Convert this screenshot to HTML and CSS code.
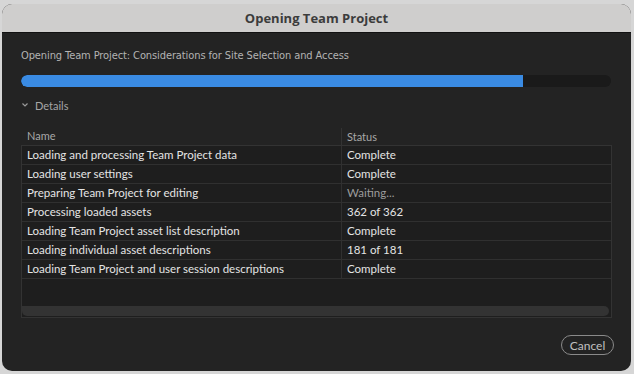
FILE: index.html
```html
<!DOCTYPE html>
<html>
<head>
<meta charset="utf-8">
<link rel="stylesheet" href="styles.css">
</head>
<body>
<div class="window">
  <div class="titlebar">Opening Team Project</div>
  <div class="content">
    <div class="subtitle">Opening Team Project: Considerations for Site Selection and Access</div>
    <div class="progress"><div class="fill" style="width: 85%"></div></div>
    <div class="details">
      <svg class="chev" width="8" height="6" viewBox="0 0 8 6"><path d="M1.5 1.5 L4 4 L6.5 1.5" fill="none" stroke="#9a9a9a" stroke-width="1.2"/></svg>
      <span>Details</span>
    </div>
    <div class="thead">
      <div class="c1">Name</div>
      <div class="c2">Status</div>
    </div>
    <div class="table">
      <div class="row"><div class="c1">Loading and processing Team Project data</div><div class="c2">Complete</div></div>
      <div class="row"><div class="c1">Loading user settings</div><div class="c2">Complete</div></div>
      <div class="row"><div class="c1">Preparing Team Project for editing</div><div class="c2 wait">Waiting...</div></div>
      <div class="row"><div class="c1">Processing loaded assets</div><div class="c2">362 of 362</div></div>
      <div class="row"><div class="c1">Loading Team Project asset list description</div><div class="c2">Complete</div></div>
      <div class="row"><div class="c1">Loading individual asset descriptions</div><div class="c2">181 of 181</div></div>
      <div class="row"><div class="c1">Loading Team Project and user session descriptions</div><div class="c2">Complete</div></div>
      <div class="spacer"></div>
      <div class="scrollbar"></div>
    </div>
    <div class="footer"><button class="cancel">Cancel</button></div>
  </div>
</div>
</body>
</html>
```
FILE: styles.css
```css
html, body {
  margin: 0;
  padding: 0;
  background: #d6d6d6;
  width: 634px;
  height: 374px;
  overflow: hidden;
}
.window {
  margin: 4px 0 0 2px;
  width: 629px;
  height: 367px;
  border-radius: 10px;
  overflow: hidden;
  background: #232323;
  display: flex;
  flex-direction: column;
  font-family: "Lato", "Open Sans", sans-serif;
}
.titlebar {
  height: 28px;
  background: #cfcecd;
  border-bottom: 1px solid #111;
  text-align: center;
  line-height: 28px;
  font-family: "Open Sans", sans-serif;
  font-weight: 700;
  font-size: 13px;
  color: #3c3c3c;
}
.content {
  padding: 0 0 0 19px;
  display: flex;
  flex-direction: column;
}
.subtitle {
  margin-top: 15px;
  line-height: 16px;
  font-size: 11px;
  color: #b3b3b3;
  font-family: "DejaVu Sans Condensed", "Liberation Sans Narrow", sans-serif;
  font-stretch: condensed;
  letter-spacing: -0.1px;
}
.progress {
  margin-top: 11px;
  width: 590px;
  height: 12px;
  border-radius: 6px;
  background: #1a1a1a;
  overflow: hidden;
}
.fill {
  height: 100%;
  background: #3a8be3;
  border-radius: 6px 0 0 6px;
}
.details {
  margin-top: 10px;
  height: 16px;
  display: flex;
  align-items: center;
  gap: 6px;
  font-size: 11px;
  color: #a6a6a6;
}
.chev { margin-left: 0; }
.thead {
  margin-top: 14px;
  height: 18px;
  width: 591px;
  display: flex;
  font-size: 11px;
  color: #a8a8a8;
}
.thead .c1 {
  width: 314px;
  padding-left: 6px;
  line-height: 18px;
}
.thead .c2 {
  border-left: 1px solid #333;
  margin-top: 1px;
  padding-left: 5px;
  line-height: 17px;
}
.table {
  width: 589px;
  height: 171px;
  border: 1px solid #333;
  background: #1e1e1e;
  display: flex;
  flex-direction: column;
}
.row {
  height: 18px;
  border-bottom: 1px solid #303030;
  display: flex;
  font-size: 11.5px;
  color: #e4e4e4;
  line-height: 18px;
}
.row .c1 {
  width: 314px;
  padding-left: 5px;
}
.row .c2 {
  border-left: 1px solid #303030;
  padding-left: 5px;
  flex: 1;
}
.row .wait { color: #9c9c9c; }
.spacer { flex: 1; }
.scrollbar {
  height: 10px;
  margin: 0 2px 1px 0;
  background: #333333;
  border-radius: 0 5px 5px 5px;
}
.footer {
  display: flex;
  justify-content: flex-end;
  width: 593px;
  margin-top: 17px;
}
.cancel {
  width: 53px;
  height: 20px;
  border: 1.5px solid #8a8a8a;
  border-radius: 10px;
  background: transparent;
  color: #c0c0c0;
  font-family: "Lato", sans-serif;
  font-size: 12px;
  padding: 0;
}
```
